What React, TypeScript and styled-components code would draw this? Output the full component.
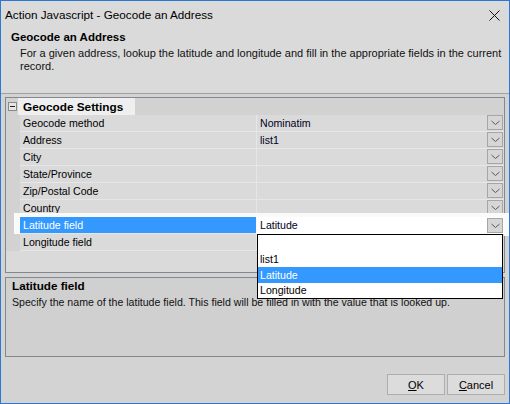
import React from "react";
import styled, { createGlobalStyle, css } from "styled-components";

const Global = createGlobalStyle`
  html, body { margin: 0; padding: 0; background: #d3d3d3; }
  * { box-sizing: border-box; }
`;

const Window = styled.div`
  width: 510px;
  height: 404px;
  border: 1px solid #2b79d0;
  background: #d3d3d3;
  display: flex;
  flex-direction: column;
  font-family: "Liberation Sans", Arial, sans-serif;
  color: #000;
  overflow: hidden;
`;

const TitleBar = styled.div`
  height: 28px;
  display: flex;
  align-items: center;
  justify-content: space-between;
  padding: 0 9px 0 4px;
  background: #dadada;
`;

const TitleText = styled.span`
  font-size: 11.7px;
  line-height: 28px;
  color: #000;
`;

const Header = styled.div`
  height: 65px;
  background: #dadada;
  padding: 1px 0 0 10px;
  border-bottom: 1px solid #a0a0a0;
`;

const HeaderTitle = styled.div`
  font-size: 11.5px;
  font-weight: bold;
  line-height: 14px;
`;

const HeaderDesc = styled.div`
  font-size: 11px;
  line-height: 13px;
  margin-top: 3px;
  padding-left: 9px;
  padding-right: 6px;
  color: #111;
`;

const Body = styled.div`
  flex: 1;
  display: flex;
  flex-direction: column;
  padding: 3px 4px 0 4px;
`;

const Grid = styled.div`
  position: relative;
  z-index: 2;
  height: 176px;
  border: 1px solid #828790;
  background: #dadada;
  display: flex;
  flex-direction: column;
`;

const CategoryRow = styled.div`
  height: 17px;
  display: flex;
  align-items: center;
  background: #d2d2d2;
`;

const Toggle = styled.div`
  width: 9px;
  height: 9px;
  margin-left: 2px;
  border: 1px solid #8a8a8a;
  background: #e6e6e6;
  display: flex;
  align-items: center;
  justify-content: center;
  &::after {
    content: "";
    width: 5px;
    height: 1px;
    background: #222;
  }
`;

const CategoryLabel = styled.div`
  margin-left: 1px;
  height: 17px;
  width: 117px;
  padding-left: 5px;
  background: #efefef;
  font-size: 11.8px;
  font-weight: bold;
  line-height: 18px;
`;

const Row = styled.div<{ $selected?: boolean }>`
  position: relative;
  height: 17px;
  display: flex;
  ${(p) =>
    p.$selected &&
    css`
      &::before {
        content: "";
        position: absolute;
        left: 8px;
        right: -8px;
        top: -4px;
        bottom: -2px;
        background: #fafafa;
      }
    `}
`;

const Margin = styled.div`
  width: 14px;
  background: #d2d2d2;
`;

const LabelCell = styled.div<{ $selected?: boolean }>`
  position: relative;
  width: 236px;
  height: 17px;
  padding-left: 3px;
  font-size: 10.6px;
  line-height: 16px;
  white-space: nowrap;
  background: ${(p) => (p.$selected ? "#3399ff" : "#dadada")};
  color: ${(p) => (p.$selected ? "#fff" : "#000")};
  border-bottom: 1px solid #e6e6e6;
`;

const Divider = styled.div`
  width: 1px;
  background: #e6e6e6;
`;

const ValueCell = styled.div<{ $editing?: boolean }>`
  position: relative;
  flex: 1;
  display: flex;
  align-items: flex-start;
  padding-left: 3px;
  font-size: 10.6px;
  line-height: 16px;
  color: #000022;
  background: ${(p) => (p.$editing ? "#ffffff" : "#dadada")};
  border-bottom: 1px solid ${(p) => (p.$editing ? "#ffffff" : "#e6e6e6")};
`;

const ValueText = styled.span`
  flex: 1;
`;

const DropButton = styled.div<{ $editing?: boolean }>`
  width: 16px;
  height: 15px;
  margin-top: ${(p) => (p.$editing ? "1px" : "0")};
  margin-right: 1px;
  border: 1px solid #a6a6a6;
  background: #d6d6d6;
  display: flex;
  align-items: center;
  justify-content: center;
`;

const DropList = styled.div`
  position: absolute;
  left: 251px;
  top: 136px;
  width: 246px;
  border: 1px solid #000;
  background: #fff;
  z-index: 3;
`;

const DropItem = styled.div<{ $active?: boolean }>`
  height: 16px;
  padding-left: 2px;
  font-size: 10.6px;
  line-height: 16px;
  background: ${(p) => (p.$active ? "#3399ff" : "#fff")};
  color: ${(p) => (p.$active ? "#fff" : "#000")};
  &:last-child {
    height: 15px;
    line-height: 15px;
  }
`;

const HelpPanel = styled.div`
  margin-top: 4px;
  height: 80px;
  border: 1px solid #828790;
  background: #d0d0d0;
  padding: 1px 6px 0 6px;
`;

const HelpTitle = styled.div`
  font-size: 11.7px;
  font-weight: bold;
  line-height: 14px;
`;

const HelpText = styled.div`
  font-size: 10.6px;
  line-height: 13px;
  margin-top: 3px;
  color: #111;
`;

const ButtonRow = styled.div`
  display: flex;
  justify-content: flex-end;
  gap: 2px;
  margin-top: 17px;
`;

const Button = styled.button`
  width: 58px;
  height: 21px;
  border: 1px solid #adadad;
  background: #dcdcdc;
  font-family: "Liberation Sans", Arial, sans-serif;
  font-size: 11px;
  color: #000;
  padding: 0;
  u { text-decoration: underline; }
`;

const Chevron = () => (
  <svg width="9" height="6" viewBox="0 0 9 6">
    <path d="M0.5 1 L4.5 4.5 L8.5 1" fill="none" stroke="#5a5a5a" strokeWidth="1" />
  </svg>
);

const CloseIcon = () => (
  <svg width="11" height="11" viewBox="0 0 11 11">
    <path d="M0.5 0.5 L10.5 10.5 M10.5 0.5 L0.5 10.5" stroke="#111" strokeWidth="1" />
  </svg>
);

type Prop = { label: string; value: string };

const props: Prop[] = [
  { label: "Geocode method", value: "Nominatim" },
  { label: "Address", value: "list1" },
  { label: "City", value: "" },
  { label: "State/Province", value: "" },
  { label: "Zip/Postal Code", value: "" },
  { label: "Country", value: "" },
  { label: "Latitude field", value: "Latitude" },
  { label: "Longitude field", value: "" },
];

const SELECTED = "Latitude field";
const options = ["", "list1", "Latitude", "Longitude"];

export default function App() {
  return (
    <>
      <Global />
      <Window>
        <TitleBar>
          <TitleText>Action Javascript - Geocode an Address</TitleText>
          <CloseIcon />
        </TitleBar>
        <Header>
          <HeaderTitle>Geocode an Address</HeaderTitle>
          <HeaderDesc>
            For a given address, lookup the latitude and longitude and fill in the appropriate fields in the current
            record.
          </HeaderDesc>
        </Header>
        <Body>
          <Grid>
            <CategoryRow>
              <Toggle />
              <CategoryLabel>Geocode Settings</CategoryLabel>
            </CategoryRow>
            {props.map((p) => {
              const sel = p.label === SELECTED;
              const last = p.label === "Longitude field";
              return (
                <Row key={p.label} $selected={sel}>
                  <Margin />
                  <LabelCell $selected={sel}>{p.label}</LabelCell>
                  <Divider />
                  <ValueCell $editing={sel}>
                    <ValueText>{p.value}</ValueText>
                    {!last && (
                      <DropButton $editing={sel}>
                        <Chevron />
                      </DropButton>
                    )}
                  </ValueCell>
                </Row>
              );
            })}
            <DropList>
              {options.map((o, i) => (
                <DropItem key={i} $active={o === "Latitude"}>
                  {o}
                </DropItem>
              ))}
            </DropList>
          </Grid>
          <HelpPanel>
            <HelpTitle>Latitude field</HelpTitle>
            <HelpText>Specify the name of the latitude field. This field will be filled in with the value that is looked up.</HelpText>
          </HelpPanel>
          <ButtonRow>
            <Button>
              <u>O</u>K
            </Button>
            <Button>
              <u>C</u>ancel
            </Button>
          </ButtonRow>
        </Body>
      </Window>
    </>
  );
}
